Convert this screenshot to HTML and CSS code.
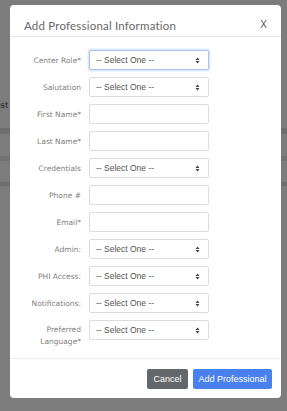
FILE: index.html
```html
<!DOCTYPE html>
<html>
<head>
<meta charset="utf-8">
<link rel="stylesheet" href="styles.css">
</head>
<body>
<div class="page">
  <div class="bg-text">st f</div>
  <div class="modal">
    <div class="modal-header">
      <h1 class="title">Add Professional Information</h1>
      <span class="close">X</span>
    </div>
    <div class="modal-body">
      <div class="row"><label class="lbl">Center Role*</label><div class="ctl select focus"><span>-- Select One --</span><svg width="5" height="7" viewBox="0 0 5 7"><path d="M2.5 0.5L4.5 3H0.5z M0.5 4h4L2.5 6.5z" fill="#444"/></svg></div></div>
      <div class="row"><label class="lbl">Salutation</label><div class="ctl select"><span>-- Select One --</span><svg width="5" height="7" viewBox="0 0 5 7"><path d="M2.5 0.5L4.5 3H0.5z M0.5 4h4L2.5 6.5z" fill="#444"/></svg></div></div>
      <div class="row"><label class="lbl">First Name*</label><div class="ctl"></div></div>
      <div class="row"><label class="lbl">Last Name*</label><div class="ctl"></div></div>
      <div class="row"><label class="lbl">Credentials</label><div class="ctl select"><span>-- Select One --</span><svg width="5" height="7" viewBox="0 0 5 7"><path d="M2.5 0.5L4.5 3H0.5z M0.5 4h4L2.5 6.5z" fill="#444"/></svg></div></div>
      <div class="row"><label class="lbl">Phone #</label><div class="ctl"></div></div>
      <div class="row"><label class="lbl">Email*</label><div class="ctl"></div></div>
      <div class="row"><label class="lbl">Admin:</label><div class="ctl select"><span>-- Select One --</span><svg width="5" height="7" viewBox="0 0 5 7"><path d="M2.5 0.5L4.5 3H0.5z M0.5 4h4L2.5 6.5z" fill="#444"/></svg></div></div>
      <div class="row"><label class="lbl">PHI Access:</label><div class="ctl select"><span>-- Select One --</span><svg width="5" height="7" viewBox="0 0 5 7"><path d="M2.5 0.5L4.5 3H0.5z M0.5 4h4L2.5 6.5z" fill="#444"/></svg></div></div>
      <div class="row"><label class="lbl">Notifications:</label><div class="ctl select"><span>-- Select One --</span><svg width="5" height="7" viewBox="0 0 5 7"><path d="M2.5 0.5L4.5 3H0.5z M0.5 4h4L2.5 6.5z" fill="#444"/></svg></div></div>
      <div class="row top"><label class="lbl two">Preferred<br>Language*</label><div class="ctl select"><span>-- Select One --</span><svg width="5" height="7" viewBox="0 0 5 7"><path d="M2.5 0.5L4.5 3H0.5z M0.5 4h4L2.5 6.5z" fill="#444"/></svg></div></div>
    </div>
    <div class="modal-footer">
      <button class="btn btn-cancel">Cancel</button>
      <button class="btn btn-primary">Add Professional</button>
    </div>
  </div>
</div>
</body>
</html>
```
FILE: styles.css
```css
html, body {
  margin: 0;
  padding: 0;
}
body {
  width: 287px;
  height: 411px;
  overflow: hidden;
  background: #7b7b7b;
  font-family: "DejaVu Sans", sans-serif;
}
.page {
  position: relative;
  height: 411px;
  padding-top: 5px;
  box-sizing: border-box;
  background: linear-gradient(to bottom, #7c7c7c 0, #7c7c7c 128px, #6f6f6f 128px, #6f6f6f 134px, #7c7c7c 134px, #7c7c7c 156px, #727272 156px, #727272 161px, #7c7c7c 161px, #7c7c7c 182px, #6e6e6e 182px, #6e6e6e 186px, #7c7c7c 186px);
}
.bg-text {
  position: absolute;
  left: 0;
  top: 100px;
  font-family: "Liberation Sans", sans-serif;
  font-weight: bold;
  font-size: 9px;
  color: #3a3a3a;
}
.modal {
  position: relative;
  margin-left: 10px;
  width: 271px;
  height: 393px;
  background: #fff;
  border-radius: 4px;
  display: flex;
  flex-direction: column;
}
.modal-header {
  height: 32px;
  border-bottom: 1px solid #e6e6e6;
  display: flex;
  align-items: center;
  justify-content: space-between;
  padding: 10px 14px 0 14px;
  box-sizing: border-box;
  flex: none;
}
.title {
  margin: 0;
  font-family: "Lato", sans-serif;
  font-weight: normal;
  font-size: 11.5px;
  color: #666;
  letter-spacing: 0.2px;
}
.close {
  font-family: "Liberation Sans", sans-serif;
  font-size: 10px;
  color: #555;
  margin-top: -3px;
  margin-right: 0;
}
.modal-body {
  flex: 1;
  padding-top: 13px;
  display: flex;
  flex-direction: column;
  gap: 7px;
}
.row {
  display: flex;
  align-items: center;
  height: 20px;
}
.row.top {
  align-items: flex-start;
}
.lbl {
  width: 71px;
  text-align: right;
  font-size: 7.5px;
  color: #808080;
  padding-right: 8px;
  box-sizing: content-box;
  flex: none;
}
.lbl.two {
  line-height: 12px;
  padding-top: 4px;
}
.ctl {
  width: 120px;
  height: 20px;
  box-sizing: border-box;
  border: 1px solid #dcdcdc;
  border-radius: 2px;
  background: #fff;
}
.select {
  display: flex;
  align-items: center;
  justify-content: space-between;
  padding: 0 8px 0 6px;
  font-family: "Liberation Sans", sans-serif;
  font-size: 8.5px;
  color: #555;
}
.focus {
  border-color: #a8c4ee;
  box-shadow: 0 0 2px 1px rgba(120, 160, 230, 0.35);
}
.modal-footer {
  flex: none;
  height: 40px;
  border-top: 1px solid #ececec;
  display: flex;
  align-items: center;
  justify-content: flex-end;
  gap: 5px;
  padding-right: 9px;
  box-sizing: border-box;
}
.btn {
  height: 20px;
  border: none;
  border-radius: 2px;
  color: #fff;
  font-family: "Liberation Sans", sans-serif;
  font-size: 9px;
  padding: 0;
  margin: 0;
}
.btn-cancel {
  width: 41px;
  background: #63676b;
}
.btn-primary {
  width: 79px;
  background: #4a7fee;
}
```
